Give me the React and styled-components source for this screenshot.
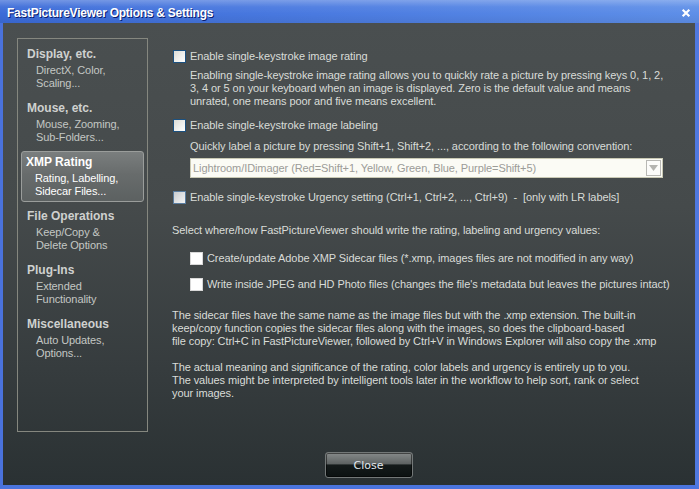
import React from "react";
import styled, { createGlobalStyle } from "styled-components";

const Global = createGlobalStyle`
  html, body { margin: 0; padding: 0; background: #2b3234; }
  body { font-family: "Liberation Sans", Arial, sans-serif; }
`;

const sections = [
  { title: "Display, etc.", sub: ["DirectX, Color,", "Scaling..."] },
  { title: "Mouse, etc.", sub: ["Mouse, Zooming,", "Sub-Folders..."] },
  { title: "XMP Rating", sub: ["Rating, Labelling,", "Sidecar Files..."], active: true },
  { title: "File Operations", sub: ["Keep/Copy &", "Delete Options"] },
  { title: "Plug-Ins", sub: ["Extended", "Functionality"] },
  { title: "Miscellaneous", sub: ["Auto Updates,", "Options..."] },
];

export default function App() {
  return (
    <>
      <Global />
      <Window>
        <TitleBar>
          <Title>FastPictureViewer Options &amp; Settings</Title>
          <CloseX viewBox="0 0 12 12">
            <path d="M2 2 L10 10 M10 2 L2 10" />
          </CloseX>
        </TitleBar>
        <Body>
          <Top>
            <Sidebar>
              {sections.map((s) => (
                <NavItem key={s.title} $active={s.active}>
                  <NavTitle $active={s.active}>{s.title}</NavTitle>
                  <NavSub $active={s.active}>
                    {s.sub[0]}
                    <br />
                    {s.sub[1]}
                  </NavSub>
                </NavItem>
              ))}
            </Sidebar>
            <Main>
              <CheckRow $mt={11.5}>
                <Box />
                <span>Enable single-keystroke image rating</span>
              </CheckRow>
              <Para $mt={6} $indent>
                Enabling single-keystroke image rating allows you to quickly rate a picture by pressing keys 0, 1, 2,
                <br />
                3, 4 or 5 on your keyboard when an image is displayed. Zero is the default value and means
                <br />
                unrated, one means poor and five means excellent.
              </Para>
              <CheckRow $mt={11}>
                <Box />
                <span>Enable single-keystroke image labeling</span>
              </CheckRow>
              <Para $mt={8} $indent>
                Quickly label a picture by pressing Shift+1, Shift+2, ..., according to the following convention:
              </Para>
              <Select>
                <SelectText>Lightroom/IDimager (Red=Shift+1, Yellow, Green, Blue, Purple=Shift+5)</SelectText>
                <Arrow>
                  <svg width="9" height="6" viewBox="0 0 9 6">
                    <path d="M0 0 H9 L4.5 6 Z" fill="#b4b4b0" />
                  </svg>
                </Arrow>
              </Select>
              <CheckRow $mt={12.5}>
                <Box $dim />
                <span>Enable single-keystroke Urgency setting (Ctrl+1, Ctrl+2, ..., Ctrl+9)&nbsp; - &nbsp;[only with LR labels]</span>
              </CheckRow>
              <Para $mt={20}>
                Select where/how FastPictureViewer should write the rating, labeling and urgency values:
              </Para>
              <CheckRow $mt={15} $sub>
                <Box $plain />
                <span>Create/update Adobe XMP Sidecar files (*.xmp, images files are not modified in any way)</span>
              </CheckRow>
              <CheckRow $mt={13} $sub>
                <Box $plain />
                <span>Write inside JPEG and HD Photo files (changes the file's metadata but leaves the pictures intact)</span>
              </CheckRow>
              <Para $mt={18}>
                The sidecar files have the same name as the image files but with the .xmp extension. The built-in
                <br />
                keep/copy function copies the sidecar files along with the images, so does the clipboard-based
                <br />
                file copy: Ctrl+C in FastPictureViewer, followed by Ctrl+V in Windows Explorer will also copy the .xmp
              </Para>
              <Para $mt={13}>
                The actual meaning and significance of the rating, color labels and urgency is entirely up to you.
                <br />
                The values might be interpreted by intelligent tools later in the workflow to help sort, rank or select
                <br />
                your images.
              </Para>
            </Main>
          </Top>
          <Footer>
            <CloseButton>Close</CloseButton>
          </Footer>
        </Body>
      </Window>
    </>
  );
}

const Window = styled.div`
  width: 699px;
  height: 489px;
  display: flex;
  flex-direction: column;
  overflow: hidden;
`;

const TitleBar = styled.div`
  height: 23px;
  display: flex;
  align-items: center;
  justify-content: space-between;
  padding: 0 8px 0 7px;
  box-sizing: border-box;
  background: linear-gradient(180deg, rgba(255, 255, 255, 0.28) 0%, rgba(255, 255, 255, 0.06) 30%, rgba(0, 0, 0, 0) 60%, rgba(0, 0, 0, 0.06) 100%),
    linear-gradient(90deg, #3b6bd8 0%, #4a7ae0 45%, #5e8fe8 100%);
`;

const Title = styled.div`
  color: #fff;
  font-family: "Liberation Sans", Arial, sans-serif;
  font-weight: bold;
  font-size: 12px;
  letter-spacing: -0.25px;
  text-shadow: 1px 1px 0 #0a1e70;
  margin-top: 2px;
`;

const CloseX = styled.svg`
  width: 10px;
  height: 10px;
  margin-top: 2px;
  path {
    stroke: #fff;
    stroke-width: 2.6;
    fill: none;
  }
`;

const Body = styled.div`
  flex: 1;
  display: flex;
  flex-direction: column;
  border-left: 3px solid #4a72dc;
  border-right: 4px solid #4f78e0;
  border-bottom: 4px solid #4b74de;
  background: linear-gradient(180deg, #4a4f50 0%, #454a4b 40%, #363c3e 75%, #2a3133 100%);
  color: #d9dcd8;
  font-size: 11px;
`;

const Top = styled.div`
  display: flex;
  padding: 15px 0 0 14px;
`;

const Sidebar = styled.div`
  width: 131px;
  height: 394px;
  box-sizing: border-box;
  border: 1px solid #85877f;
  padding: 4px 3px 2px;
  display: flex;
  flex-direction: column;
  gap: 3px;
  flex-shrink: 0;
`;

const NavItem = styled.div`
  height: 51px;
  box-sizing: border-box;
  padding: 3px 5px 0;
  border: 1px solid ${(p) => (p.$active ? "#9a9d9b" : "transparent")};
  border-radius: 3px;
  background: ${(p) =>
    p.$active ? "linear-gradient(180deg, #7a7e7e 0%, #686c6c 45%, #5c6161 100%)" : "transparent"};
  padding-left: ${(p) => (p.$active ? "4px" : "5px")};
`;

const NavTitle = styled.div`
  font-weight: bold;
  font-size: 12px;
  line-height: 14px;
  color: ${(p) => (p.$active ? "#ffffff" : "#cfd1cf")};
`;

const NavSub = styled.div`
  margin-top: 3px;
  padding-left: 9px;
  line-height: 13px;
  font-size: 11px;
  letter-spacing: -0.1px;
  color: ${(p) => (p.$active ? "#ffffff" : "#c4c7c4")};
`;

const Main = styled.div`
  margin-left: 24px;
  display: flex;
  flex-direction: column;
  white-space: nowrap;
  letter-spacing: -0.08px;
`;

const CheckRow = styled.div`
  display: flex;
  align-items: center;
  gap: 4px;
  height: 13px;
  line-height: 13px;
  margin-top: ${(p) => p.$mt}px;
  margin-left: ${(p) => (p.$sub ? "18px" : "1px")};
`;

const Box = styled.div`
  width: 13px;
  height: 13px;
  box-sizing: border-box;
  flex-shrink: 0;
  border: 1px solid ${(p) => (p.$plain ? "#d8d8d8" : p.$dim ? "#5a7da0" : "#1c5180")};
  background: ${(p) =>
    p.$plain
      ? "#ffffff"
      : p.$dim
      ? "linear-gradient(135deg, #c8ccd0 0%, #f4f4f4 100%)"
      : "linear-gradient(135deg, #dcdcd6 0%, #ffffff 100%)"};
`;

const Para = styled.div`
  line-height: 13px;
  margin-top: ${(p) => p.$mt}px;
  margin-left: ${(p) => (p.$indent ? "18px" : "0")};
`;

const Select = styled.div`
  margin: 5.5px 0 0 18px;
  width: 473px;
  height: 20px;
  box-sizing: border-box;
  border: 1px solid #c9c9b4;
  background: #fbfbf5;
  display: flex;
  align-items: center;
  justify-content: space-between;
  padding: 0 1px 0 2px;
`;

const SelectText = styled.span`
  color: #9c9c98;
`;

const Arrow = styled.div`
  width: 15px;
  height: 16px;
  box-sizing: border-box;
  border: 1px solid #b8b8b4;
  background: #fcfcfa;
  display: flex;
  align-items: center;
  justify-content: center;
`;

const Footer = styled.div`
  flex: 1;
  display: flex;
  justify-content: center;
  align-items: flex-start;
  padding: 20px 0 0 39px;
`;

const CloseButton = styled.button`
  width: 88px;
  height: 26px;
  border: 1px solid #737878;
  border-radius: 3px;
  background: linear-gradient(180deg, #868a8a 0%, #5e6363 45%, #141a1a 50%, #0c1212 100%);
  color: #e2e8ee;
  font-family: "DejaVu Sans", Verdana, sans-serif;
  font-size: 11px;
  box-shadow: inset 0 0 0 1px rgba(0, 0, 0, 0.5);
`;
